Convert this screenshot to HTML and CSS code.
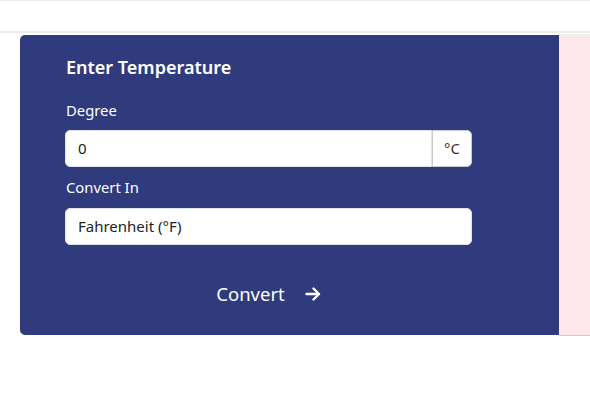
FILE: index.html
```html
<!DOCTYPE html>
<html>
<head>
<meta charset="utf-8">
<link rel="stylesheet" href="styles.css">
</head>
<body>
<header class="topbar"></header>
<main class="main">
  <section class="card">
    <h2 class="title">Enter Temperature</h2>
    <label class="label">Degree</label>
    <div class="group">
      <div class="input">0</div>
      <div class="addon">°C</div>
    </div>
    <label class="label label2">Convert In</label>
    <div class="select">Fahrenheit (°F)</div>
    <div class="btnrow">
      <button class="btn">Convert
        <svg class="arrow" width="16" height="14" viewBox="0 0 16 14"><path d="M1.5 7H14M8.5 1.5L14 7L8.5 12.5" fill="none" stroke="#fff" stroke-width="2.4" stroke-linecap="round" stroke-linejoin="round"/></svg>
      </button>
    </div>
  </section>
  <aside class="side"></aside>
</main>
</body>
</html>
```

FILE: styles.css
```css
html, body { margin: 0; padding: 0; background: #fff; }
body { font-family: "Noto Sans", "Open Sans", sans-serif; }
.topbar {
  height: 30px;
  border-top: 1px solid #ececec;
  border-bottom: 2px solid #ececec;
  background: #fff;
}
.main {
  display: flex;
  margin-top: 1px;
}
.card {
  margin-left: 20px;
  margin-top: 1px;
  width: 539px;
  height: 300px;
  box-sizing: border-box;
  background: #2f3b7d;
  border-radius: 5px 0 0 5px;
  padding: 18px 87px 0 45px;
  color: #fff;
}
.side {
  flex: 1;
  height: 300px;
  background: #fce8ea;
  border-top: 1px solid #eee;
  border-bottom: 1px solid #c9c9c9;
}
.title {
  margin: 0 0 18px 1px;
  font-size: 18px;
  font-weight: 600;
  line-height: 28px;
}
.label {
  display: block;
  margin-left: 1px;
  font-size: 14.8px;
  line-height: 22px;
  margin-bottom: 9px;
}
.label2 { margin-top: 9px; margin-bottom: 10px; }
.group { display: flex; height: 37px; }
.input {
  flex: 1;
  background: #fff;
  color: #222;
  border: 1px solid #dfe3ee;
  border-radius: 5px 0 0 5px;
  font-size: 15px;
  line-height: 35px;
  padding-left: 12px;
}
.addon {
  width: 38px;
  background: #fff;
  color: #333;
  border: 1px solid #c9cbd3;
  border-radius: 0 5px 5px 0;
  font-size: 15px;
  line-height: 35px;
  text-align: center;
}
.select {
  height: 37px;
  box-sizing: border-box;
  background: #fff;
  color: #222;
  border: 1px solid #dfe3ee;
  border-radius: 5px;
  font-size: 15px;
  line-height: 35px;
  padding-left: 12px;
}
.btnrow { display: flex; justify-content: center; margin-top: 36px; }
.btn {
  background: none;
  border: 0;
  color: #fff;
  font-family: inherit;
  font-size: 18.5px;
  display: flex;
  align-items: center;
  gap: 20px;
  padding: 0;
  line-height: 26px;
}
.arrow { display: block; }
```
